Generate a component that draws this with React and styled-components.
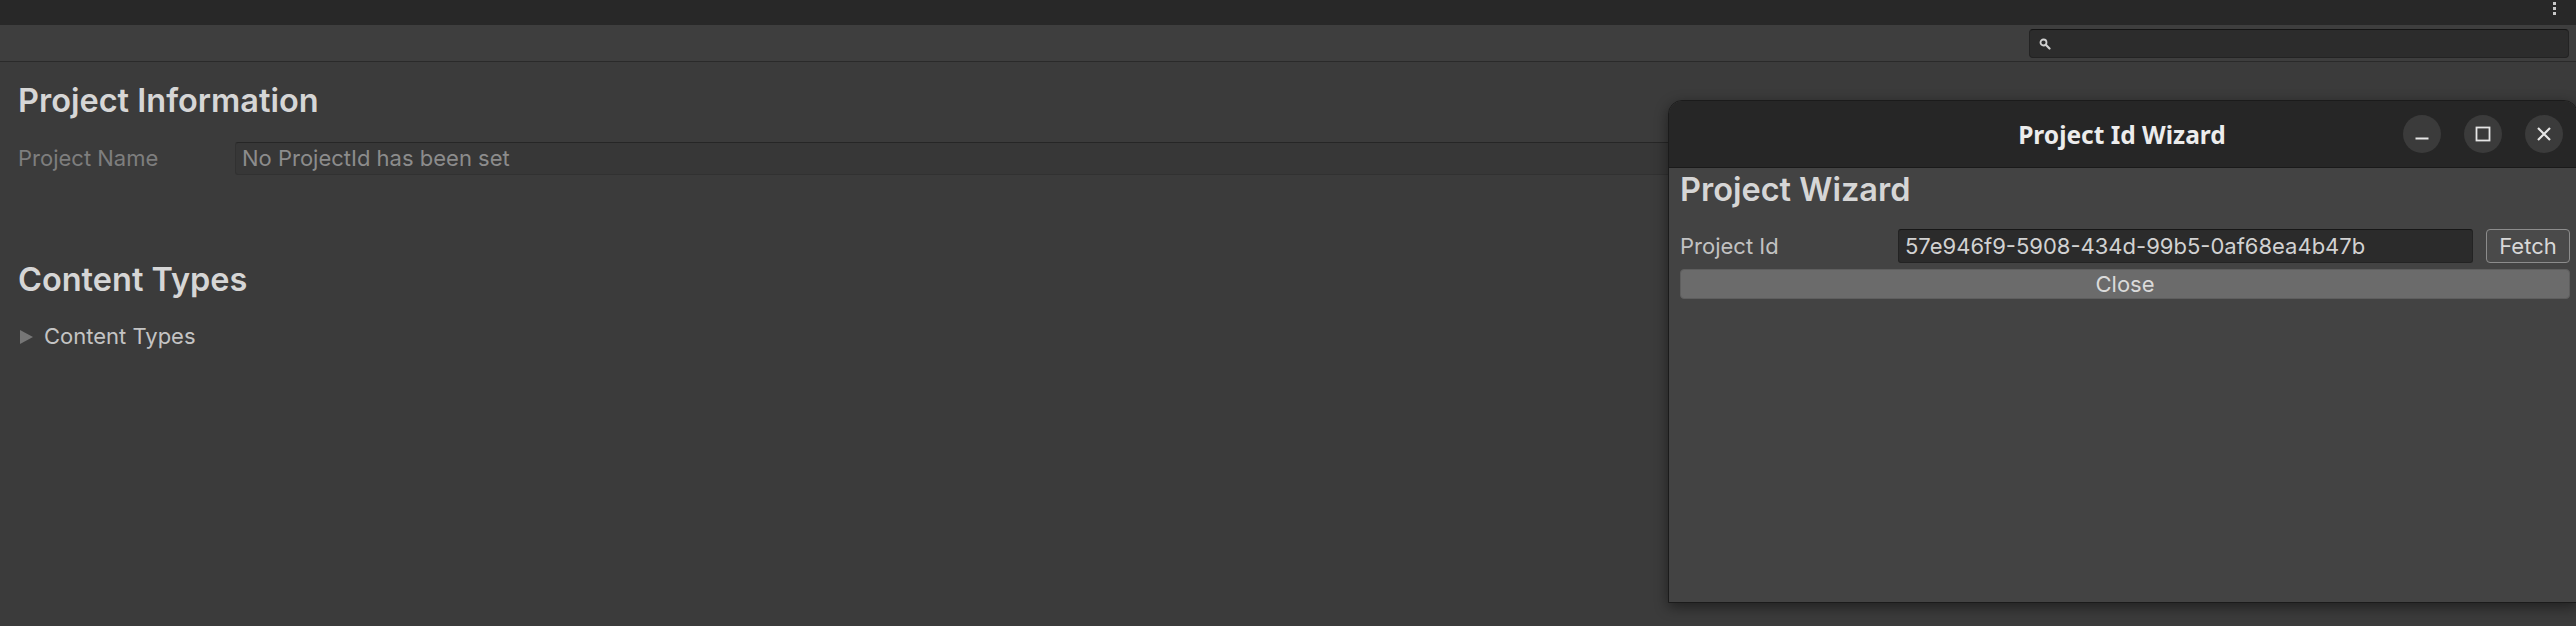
import React from 'react';
import styled, { createGlobalStyle } from 'styled-components';

const Global = createGlobalStyle`
	html, body {
		margin: 0;
		padding: 0;
		background: #3b3b3b;
		overflow: hidden;
	}
	* {
		box-sizing: border-box;
	}
`;

const Page = styled.div`
	position: relative;
	width: 2576px;
	height: 626px;
	display: flex;
	flex-direction: column;
	font-family: Inter, 'Noto Sans', sans-serif;
	background: #3b3b3b;
	overflow: hidden;
`;

const TopBar = styled.div`
	height: 25px;
	flex: 0 0 25px;
	background: #282828;
	display: flex;
	justify-content: flex-end;
	padding-right: 20px;
	padding-top: 2px;
`;

const Kebab = styled.div`
	display: flex;
	flex-direction: column;
	gap: 2px;
	span {
		width: 3px;
		height: 3px;
		background: #c8c8c8;
	}
`;

const Toolbar = styled.div`
	height: 37px;
	flex: 0 0 37px;
	background: #3e3e3e;
	border-bottom: 1px solid #2a2a2a;
	display: flex;
	justify-content: flex-end;
	align-items: flex-start;
	padding: 4px 7px 0 0;
`;

const Search = styled.div`
	width: 540px;
	height: 29px;
	background: #2c2c2c;
	border: 1px solid #232323;
	border-top-color: #141414;
	border-radius: 4px;
	display: flex;
	align-items: center;
	padding-left: 9px;
`;

const Body = styled.div`
	flex: 1;
	padding: 19px 0 0 18px;
	display: flex;
	flex-direction: column;
`;

const SectionTitle = styled.div`
	font-size: 32.5px;
	font-weight: 600;
	line-height: 40px;
	color: #d6d6d6;
	margin-top: ${p => p.$top || 0}px;
`;

const FieldRow = styled.div`
	display: flex;
	align-items: stretch;
	margin-top: ${p => p.$top || 0}px;
	gap: ${p => p.$gap || 0}px;
`;

const Label = styled.div`
	flex: 0 0 ${p => p.$width}px;
	font-size: 22px;
	line-height: ${p => p.$height}px;
	color: ${p => (p.$dim ? '#7e7e7e' : '#c2c2c2')};
`;

const Field = styled.div`
	flex: 1;
	height: ${p => p.$height}px;
	font-size: 22px;
	line-height: ${p => p.$height - 2}px;
	padding-left: 6px;
	color: ${p => (p.$dim ? '#8c8c8c' : '#d2d2d2')};
	background: ${p => (p.$dim ? '#373737' : '#2b2b2b')};
	border: 1px solid ${p => (p.$dim ? '#313131' : '#232323')};
	border-top-color: ${p => (p.$dim ? '#262626' : '#171717')};
	border-radius: 3px;
	white-space: nowrap;
	overflow: hidden;
`;

const Foldout = styled.div`
	margin-top: 20px;
	display: flex;
	align-items: center;
	gap: 11px;
	font-size: 22px;
	line-height: 33px;
	color: #c4c4c4;
	padding-left: 2px;
`;

const Arrow = styled.span`
	width: 0;
	height: 0;
	border-top: 7px solid transparent;
	border-bottom: 7px solid transparent;
	border-left: 13px solid #767676;
`;

const Window = styled.div`
	position: absolute;
	left: 1668px;
	top: 100px;
	width: 910px;
	height: 503px;
	background: #434343;
	border: 1px solid #1b1b1b;
	border-radius: 14px 14px 0 0;
	box-shadow: 0 4px 14px rgba(0, 0, 0, 0.45);
	display: flex;
	flex-direction: column;
	overflow: hidden;
`;

const TitleBar = styled.div`
	position: relative;
	flex: 0 0 67px;
	background: #262626;
	border-bottom: 1px solid #1a1a1a;
	display: flex;
	align-items: center;
	justify-content: center;
`;

const Title = styled.div`
	font-family: 'Noto Sans', 'Open Sans', sans-serif;
	font-weight: 700;
	font-size: 24.5px;
	color: #ececec;
	padding-right: 2px;
`;

const Controls = styled.div`
	position: absolute;
	right: 14px;
	top: 14px;
	display: flex;
	gap: 23px;
`;

const CtlButton = styled.div`
	width: 38px;
	height: 38px;
	border-radius: 50%;
	background: #3b3b3b;
	display: flex;
	align-items: center;
	justify-content: center;
`;

const WinBody = styled.div`
	flex: 1;
	padding: 2px 7px 0 11px;
	display: flex;
	flex-direction: column;
`;

const Button = styled.div`
	flex: ${p => (p.$wide ? '1' : `0 0 ${p.$width}px`)};
	height: ${p => p.$height}px;
	font-size: 22px;
	line-height: ${p => p.$height - 2}px;
	text-align: center;
	color: ${p => (p.$light ? '#dadada' : '#d8d8d8')};
	background: ${p => (p.$light ? '#6b6b6b' : '#4a4a4a')};
	border: 1px solid ${p => (p.$light ? '#5e5e5e' : '#8c8c8c')};
	border-radius: 4px;
`;

const SearchIcon = () => (
	<svg width="12" height="12" viewBox="0 0 12 12">
		<circle cx="4.5" cy="4.5" r="3" fill="none" stroke="#d0d0d0" strokeWidth="1.8" />
		<path d="M6.8 6.8 L10.5 10.5" stroke="#d0d0d0" strokeWidth="2.2" strokeLinecap="round" />
	</svg>
);

const MinIcon = () => (
	<svg width="16" height="16" viewBox="0 0 16 16">
		<path d="M1.5 12.5 H14.5" stroke="#e6e6e6" strokeWidth="2" />
	</svg>
);

const MaxIcon = () => (
	<svg width="16" height="16" viewBox="0 0 16 16">
		<rect x="1.5" y="1.5" width="13" height="13" fill="none" stroke="#e6e6e6" strokeWidth="1.8" />
	</svg>
);

const CloseIcon = () => (
	<svg width="16" height="16" viewBox="0 0 16 16">
		<path d="M2 2 L14 14 M14 2 L2 14" stroke="#e6e6e6" strokeWidth="2.2" />
	</svg>
);

const App = () => (
	<Page>
		<Global />
		<TopBar>
			<Kebab>
				<span />
				<span />
				<span />
			</Kebab>
		</TopBar>
		<Toolbar>
			<Search>
				<SearchIcon />
			</Search>
		</Toolbar>
		<Body>
			<SectionTitle>Project Information</SectionTitle>
			<FieldRow $top={21}>
				<Label $width={217} $height={33} $dim>
					Project Name
				</Label>
				<Field $height={33} $dim>
					No ProjectId has been set
				</Field>
			</FieldRow>
			<SectionTitle $top={85}>Content Types</SectionTitle>
			<Foldout>
				<Arrow />
				Content Types
			</Foldout>
		</Body>

		<Window>
			<TitleBar>
				<Title>Project Id Wizard</Title>
				<Controls>
					<CtlButton>
						<MinIcon />
					</CtlButton>
					<CtlButton>
						<MaxIcon />
					</CtlButton>
					<CtlButton>
						<CloseIcon />
					</CtlButton>
				</Controls>
			</TitleBar>
			<WinBody>
				<SectionTitle>Project Wizard</SectionTitle>
				<FieldRow $top={19}>
					<Label $width={218} $height={34}>
						Project Id
					</Label>
					<FieldRow $gap={13} style={{ flex: 1 }}>
						<Field $height={34}>57e946f9-5908-434d-99b5-0af68ea4b47b</Field>
						<Button $width={84} $height={34}>
							Fetch
						</Button>
					</FieldRow>
				</FieldRow>
				<FieldRow $top={6}>
					<Button $wide $light $height={30}>
						Close
					</Button>
				</FieldRow>
			</WinBody>
		</Window>
	</Page>
);

export default App;
